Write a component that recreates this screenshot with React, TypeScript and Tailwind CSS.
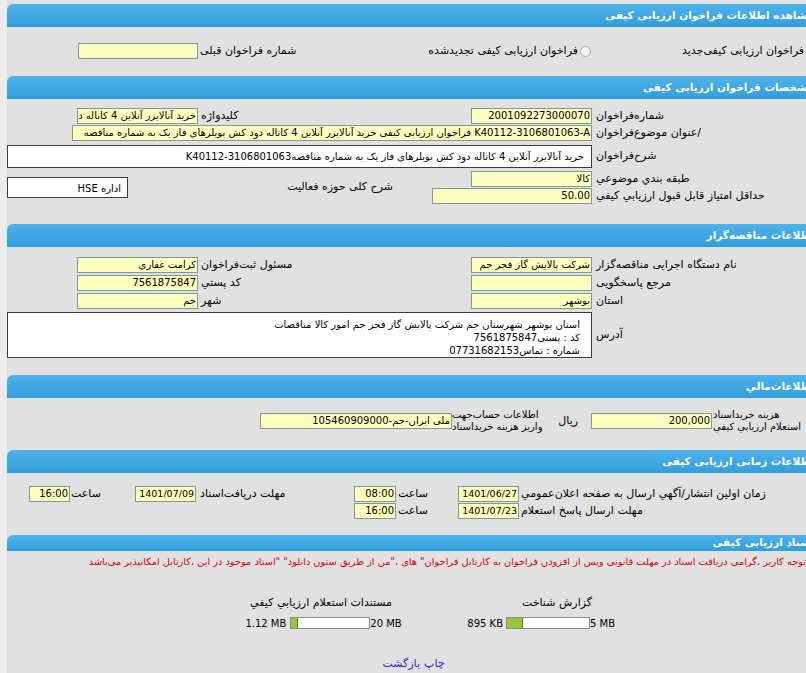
import React from 'react';

// section header bar, blue with rounded top-left corner
const Header = ({ title, h = 'h-[23px]' }: { title: string; h?: string }) => (
  <div className={`${h} flex items-center rounded-tl-[6px] bg-linear-to-b from-[#50b2ea] to-[#309edd] pr-[6px] text-[10.5px] font-bold text-white whitespace-nowrap`}>
    {title}
  </div>
);

const Field = ({ w, size = 'text-[10px]', children }: { w: string; size?: string; children?: React.ReactNode }) => (
  <div className={`${w} ${size} h-[16px] shrink-0 overflow-hidden whitespace-nowrap border border-[#7d9a9a] bg-[#ffffbf] px-[1px] leading-[14px] text-black`}>
    {children}
  </div>
);

const Label = ({ w, children, pad = 'pl-[4px]' }: { w: string; children: React.ReactNode; pad?: string }) => (
  <div className={`${w} ${pad} shrink-0 whitespace-nowrap text-left`}>{children}</div>
);

const Radio = ({ className = '' }: { className?: string }) => (
  <span className={`inline-block h-[11px] w-[11px] shrink-0 rounded-full border border-[#a9a9a9] bg-[#f4f4f4] ${className}`} />
);

const Bar = ({ w, fill }: { w: string; fill: string }) => (
  <div dir="ltr" className={`${w} flex h-[12px] shrink-0 border border-[#8c8c8c] bg-white`}>
    <div className={`${fill} h-full border-r border-[#5f7f1f] bg-[#99c43a]`} />
  </div>
);

export default function App() {
  return (
    <div className="min-h-screen w-[806px] overflow-hidden bg-[#ececec] pl-[7px] font-['Tahoma','DejaVu_Sans',sans-serif] text-[11px] text-black">
      <div dir="rtl" className="w-[813px] bg-[#e1e1e1] pt-[4px]">
        {/* 1 */}
        <Header title="مشاهده اطلاعات فراخوان ارزیابی کیفی" />
        <div className="h-[49px] pt-[16px]">
          <div className="flex h-[16px] items-center">
            <div className="flex w-[227px] shrink-0 items-center">
              <Radio className="mr-[1px] ml-[4px]" />
              <span className="whitespace-nowrap">فراخوان ارزیابی کیفی‌جدید</span>
            </div>
            <div className="flex w-[395px] shrink-0 items-center justify-between">
              <div className="flex items-center">
                <Radio className="mr-[2px] ml-[2px]" />
                <span className="whitespace-nowrap">فراخوان ارزیابی کیفی تجدیدشده</span>
              </div>
              <span className="whitespace-nowrap pl-[2px]">شماره فراخوان قبلی</span>
            </div>
            <Field w="w-[120px]" />
          </div>
        </div>

        {/* 2 */}
        <Header title="مشخصات فراخوان ارزیابی کیفی" />
        <div className="h-[125px] pt-[9px]">
          <div className="flex h-[16px] items-center">
            <Label w="w-[228px]">شماره‌فراخوان</Label>
            <Field w="w-[121px]">2001092273000070</Field>
            <Label w="w-[273px]" pad="pl-[3px]">کلیدواژه</Label>
            <Field w="w-[121px]">خرید آنالایزر آنلاین 4 کاناله دود کش</Field>
          </div>
          <div className="mt-[1px] flex h-[16px] items-center">
            <Label w="w-[228px]">/عنوان موضوع‌فراخوان</Label>
            <Field w="w-[520px]">K40112-3106801063-A فراخوان ارزیابی کیفی خرید آنالایزر آنلاین 4 کاناله دود کش بویلرهای فاز یک به شماره مناقصه</Field>
          </div>
          <div className="mt-[4px] flex h-[23px] items-center">
            <Label w="w-[228px]">شرح‌فراخوان</Label>
            <div className="h-[23px] w-[585px] shrink-0 overflow-hidden whitespace-nowrap border border-[#3c3c3c] bg-white pr-[7px] pt-[3px] text-[10px]">
              خرید آنالایزر آنلاین 4 کاناله دود کش بویلرهای فاز یک به شماره مناقصه‌K40112-3106801063
            </div>
          </div>
          <div className="mt-[3px] flex items-center">
            <div className="w-[388px] shrink-0">
              <div className="flex h-[16px] items-center">
                <Label w="w-[228px]">طبقه بندي موضوعي</Label>
                <Field w="w-[121px]">کالا</Field>
              </div>
              <div className="mt-[1px] flex h-[16px] items-center">
                <Label w="w-[228px]">حداقل امتیاز قابل قبول ارزيابي كيفي</Label>
                <Field w="w-[160px]">50.00</Field>
              </div>
            </div>
            <div className="flex w-[425px] shrink-0 items-center">
              <div className="w-[304px] shrink-0 whitespace-nowrap pr-[39px]">شرح کلی حوزه فعالیت</div>
              <div className="h-[21px] w-[121px] shrink-0 overflow-hidden whitespace-nowrap border border-[#3c3c3c] bg-white pr-[6px] pt-[3px] text-[10px]">
                اداره HSE
              </div>
            </div>
          </div>
        </div>

        {/* 3 */}
        <Header title="اطلاعات مناقصه‌گزار" />
        <div className="h-[128px] pt-[10px]">
          <div className="flex h-[16px] items-center">
            <Label w="w-[228px]">نام دستگاه اجرایی مناقصه‌گزار</Label>
            <Field w="w-[121px]">شرکت پالایش گاز فجر جم</Field>
            <Label w="w-[273px]" pad="pl-[3px]">مسئول ثبت‌فراخوان</Label>
            <Field w="w-[121px]">کرامت غفاری</Field>
          </div>
          <div className="mt-[2px] flex h-[16px] items-center">
            <Label w="w-[228px]">مرجع پاسخگویی</Label>
            <Field w="w-[121px]" />
            <Label w="w-[273px]" pad="pl-[3px]">کد پستي</Label>
            <Field w="w-[121px]">7561875847</Field>
          </div>
          <div className="mt-[2px] flex h-[16px] items-center">
            <Label w="w-[228px]">استان</Label>
            <Field w="w-[121px]">بوشهر</Field>
            <Label w="w-[273px]" pad="pl-[3px]">شهر</Label>
            <Field w="w-[121px]">جم</Field>
          </div>
          <div className="mt-[3px] flex items-center">
            <Label w="w-[228px]">آدرس</Label>
            <div className="h-[46px] w-[585px] shrink-0 border border-[#3c3c3c] bg-white pr-[11px] pt-[5px] text-[10px] leading-[13px]">
              <div>استان بوشهر شهرستان جم شرکت پالایش گاز فجر جم امور کالا مناقصات</div>
              <div>کد : پستی7561875847</div>
              <div>شماره : تماس07731682153</div>
            </div>
          </div>
        </div>

        {/* 4 */}
        <Header title="اطلاعات‌مالي" />
        <div className="h-[52px] pt-[11px]">
          <div className="flex h-[24px] items-center">
            <div className="w-[108px] shrink-0 whitespace-nowrap pl-[1px] text-left text-[10px] leading-[12px]">
              هزینه خرید‌اسناد
              <br />
              استعلام ارزيابي كيفي
            </div>
            <Field w="w-[121px]">200,000</Field>
            <div className="w-[38px] shrink-0 pr-[13px]">ریال</div>
            <div className="w-[101px] shrink-0 whitespace-nowrap text-left text-[10px] leading-[12px]">
              اطلاعات حساب‌جهت
              <br />
              واریز هزینه خرید‌اسناد
            </div>
            <Field w="w-[192px]">ملی ایران-جم-105460909000</Field>
          </div>
        </div>

        {/* 5 */}
        <Header title="اطلاعات زمانی ارزیابی کیفی" />
        <div className="h-[62px] pt-[13px]">
          <div className="flex h-[16px] items-center">
            <Label w="w-[301px]" pad="pl-[2px]">زمان اولین انتشار/آگهي ارسال به صفحه اعلان‌عمومي</Label>
            <Field w="w-[61px]" size="text-[9.5px]">1401/06/27</Field>
            <Label w="w-[62px]" pad="pl-[2px]">ساعت</Label>
            <Field w="w-[42px]">08:00</Field>
            <Label w="w-[158px]" pad="pl-[4px]">مهلت دریافت‌اسناد</Label>
            <Field w="w-[61px]" size="text-[9.5px]">1401/07/09</Field>
            <Label w="w-[65px]" pad="pl-[1px]">ساعت</Label>
            <Field w="w-[41px]">16:00</Field>
          </div>
          <div className="mt-[1px] flex h-[16px] items-center">
            <Label w="w-[301px]" pad="pl-[2px]">مهلت ارسال پاسخ استعلام</Label>
            <Field w="w-[61px]" size="text-[9.5px]">1401/07/23</Field>
            <Label w="w-[62px]" pad="pl-[2px]">ساعت</Label>
            <Field w="w-[42px]">16:00</Field>
          </div>
        </div>

        {/* 6 */}
        <Header title="اسناد ارزیابی کیفی" h="h-[16px]" />
        <div className="pb-[10px]">
          <div className="mt-[4px] h-[14px] whitespace-nowrap pr-[14px] text-[9.8px] text-[#e00000]">
            توجه کاربر ،گرامی دریافت اسناد در مهلت قانونی وپس از افزودن فراخوان به کارتابل فراخوان" های ،"من از طریق ستون دانلود" "اسناد موجود در این ،کارتابل امکانپذیر می‌باشد
          </div>
          <div className="mt-[27px] flex h-[14px] items-center">
            <div className="w-[228px] shrink-0" />
            <div className="w-[200px] shrink-0 whitespace-nowrap">گزارش شناخت</div>
            <div className="shrink-0 whitespace-nowrap">مستندات استعلام ارزيابي كيفي</div>
          </div>
          <div className="mt-[7px] flex h-[12px] items-center text-[10px]">
            <div className="w-[208px] shrink-0" />
            <div className="flex shrink-0 items-center">
              <span dir="ltr" className="w-[22px] whitespace-nowrap text-right">5 MB</span>
              <Bar w="w-[84px]" fill="w-[16px]" />
              <span dir="ltr" className="mr-[3px] whitespace-nowrap">895 KB</span>
            </div>
            <div className="mr-[69px] flex shrink-0 items-center">
              <span dir="ltr" className="w-[28px] whitespace-nowrap text-right">20 MB</span>
              <Bar w="w-[80px]" fill="w-[7px]" />
              <span dir="ltr" className="mr-[4px] whitespace-nowrap">1.12 MB</span>
            </div>
          </div>
          <div className="mt-[27px] flex justify-center gap-[4px] text-[#2a2ad0]">
            <a className="cursor-pointer">چاپ</a>
            <a className="cursor-pointer">بازگشت</a>
          </div>
        </div>
      </div>
    </div>
  );
}
